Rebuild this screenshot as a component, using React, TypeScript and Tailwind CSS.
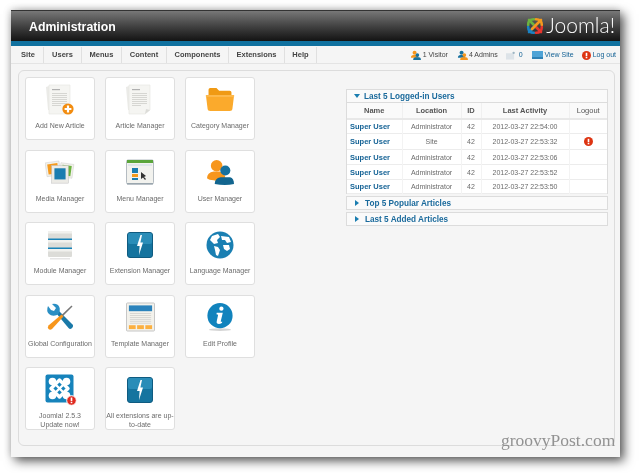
import React from "react";

const Doc = ({ plus }: { plus?: boolean }) => (
  <svg width="34" height="34" viewBox="0 0 34 34">
    <path d="M3 4 L9 2 L9 28 L5 27 Z" fill="#ebebe8" />
    <path d="M6 2 H27 V27 L22 31 H6 Z" fill="#f5f5f2" stroke="#e8e8e4" strokeWidth="0.7" />
    <path d="M22 31 L23 26 L27 27 Z" fill="#dcdcd8" />
    <rect x="9" y="6" width="8" height="1.2" fill="#b0b0b0" />
    {[10, 12, 14, 16, 18, 20, 22].map((y) => (
      <rect key={y} x="9" y={y} width={y === 22 ? 9 : 15} height="1" fill="#d6d6d2" />
    ))}
    {plus && (
      <>
        <circle cx="25" cy="26" r="5.6" fill="#f28c0f" />
        <path d="M25 22.6 V29.4 M21.6 26 H28.4" stroke="#fff" strokeWidth="2.2" />
      </>
    )}
  </svg>
);

const Folder = () => (
  <svg width="30" height="25" viewBox="0 0 34 28">
    <path d="M4 3 Q4 1 6 1 H13 L16 4 H28 Q30 4 30 6 V12 H4 Z" fill="#f09a14" />
    <path d="M1 9 H33 L31 25 Q31 27 28 27 H6 Q3 27 3 25 Z" fill="#fbaa2c" />
    <rect x="1" y="9" width="32" height="2" fill="#fdbb50" />
  </svg>
);

const Media = () => (
  <svg width="30" height="26" viewBox="0 0 32 28">
    <g transform="rotate(-8 9 11)">
      <rect x="1" y="3" width="15" height="15" fill="#f2f1ea" stroke="#ccc" strokeWidth=".5" />
      <rect x="3" y="5" width="11" height="11" fill="#f59a1e" />
    </g>
    <g transform="rotate(8 24 12)">
      <rect x="16" y="5" width="14" height="15" fill="#f2f1ea" stroke="#ccc" strokeWidth=".5" />
      <rect x="18" y="7" width="10" height="11" fill="#6cb33f" />
    </g>
    <rect x="7" y="7" width="18" height="19" fill="#ecebe6" stroke="#bbb" strokeWidth=".5" />
    <rect x="10" y="10" width="12" height="12" fill="#1a7db0" />
  </svg>
);

const MenuIcon = () => (
  <svg width="28" height="26" viewBox="0 0 28 26">
    <rect x="0.5" y="1" width="27" height="24" rx="1.5" fill="#f2f2ee" stroke="#b5bcc2" />
    <rect x="1" y="1" width="26" height="3" fill="#5aa53a" />
    <rect x="2" y="5" width="24" height="2" fill="#dfe6ea" />
    <rect x="6" y="9" width="6" height="5" fill="#1a7db0" />
    <rect x="6" y="15" width="6" height="3" fill="#f29a1e" />
    <rect x="6" y="19" width="6" height="2" fill="#1a7db0" />
    <path d="M15 13 L15 20 L17 18.5 L19 21 L20 20 L18 18 L20 17 Z" fill="#333" />
    <rect x="1" y="24" width="26" height="1.5" fill="#9aa6ae" />
  </svg>
);

const Users = () => (
  <svg width="29" height="27" viewBox="0 0 30 28">
    <circle cx="11" cy="7" r="6" fill="#f7961c" />
    <path d="M1 20 Q1 14 8 13 H14 Q20 14 20 20 Q14 24 8 22 Q3 22 1 20Z" fill="#f7961c" />
    <circle cx="20" cy="12" r="5.2" fill="#17719f" />
    <path d="M9 26 Q9 20 15 19 H25 Q29 20 29 26 Q20 28 9 26Z" fill="#12658f" />
  </svg>
);

const Module = () => (
  <svg width="26" height="30" viewBox="0 0 26 30">
    {[1, 10, 19].map((y) => (
      <g key={y}>
        <rect x="1" y={y} width="24" height="8" rx="1" fill="#dcdcd8" />
        <rect x="1" y={y} width="24" height="2.5" fill="#f1f1ee" />
        {y > 1 && <rect x="1" y={y - 1.5} width="24" height="1.5" fill="#1a83b8" />}
      </g>
    ))}
    <rect x="3" y="28" width="20" height="1.5" fill="#e5e5e5" />
  </svg>
);

const Extension = () => (
  <svg width="26" height="26" viewBox="0 0 26 26">
    <rect x="0.5" y="0.5" width="25" height="25" rx="2.5" fill="#15749f" stroke="#0f5b80" />
    <rect x="1" y="1" width="24" height="11" rx="2" fill="#2a8db8" />
    <path d="M13.5 3 L10 14 L12.6 14 L12 23 L16 10.5 L13.4 10.5 L15 3 Z" fill="#fff" />
  </svg>
);

const Globe = () => (
  <svg width="28" height="28" viewBox="0 0 28 28">
    <circle cx="14" cy="14" r="13.5" fill="#1a7fb2" />
    <path d="M6 5 L12 3 L14 6 L11 9 L12 12 L8 13 L4 9 Z" fill="#fff" />
    <path d="M15 5 L23 6 L25 11 L21 12 L19 9 L16 9 Z" fill="#fff" />
    <path d="M8 15 L12 16 L14 19 L12 25 L10 24 L9 19 Z" fill="#fff" />
    <path d="M17 14 L23 14 L24 18 L21 20 L18 18 Z" fill="#fff" />
  </svg>
);

const Tools = () => (
  <svg width="28" height="28" viewBox="0 0 28 28">
    <path d="M10 10 L12.5 7.5 L27 22 Q27.5 24 25.5 25.5 Q24 26.5 22.5 25 Z" fill="#1a79a8" />
    <path d="M2 3 Q0 8 3 11 Q6 14 11 12 L13 10 Q15 5 12 2 Q9 0 6 1 L10 5 L8 8 L5 7 Z" fill="#2a8fc4" />
    <path d="M25.5 2.5 L26.5 3.5 L17 13 L15.5 12 Z" fill="#777" />
    <path d="M15.5 11.5 L17.5 13.5 L6 26 Q4 27.5 2.5 26 Q1 24.5 2.5 22.5 Z" fill="#f7961c" />
  </svg>
);

const Template = () => (
  <svg width="29" height="30" viewBox="0 0 30 30">
    <rect x="0.5" y="0.5" width="29" height="29" rx="1" fill="#f3f2ec" stroke="#c4c4c4" />
    <rect x="3" y="3" width="24" height="6" fill="#2b83bc" />
    {[11, 13, 15, 17, 19, 21].map((y) => (
      <rect key={y} x="4" y={y} width="22" height=".8" fill="#d0d0cc" />
    ))}
    <rect x="3" y="23.5" width="7" height="4" fill="#fbb040" />
    <rect x="11.5" y="23.5" width="7" height="4" fill="#fbb040" />
    <rect x="20" y="23.5" width="7" height="4" fill="#fbb040" />
  </svg>
);

const Info = () => (
  <svg width="28" height="31" viewBox="0 0 30 32">
    <ellipse cx="15" cy="29" rx="12" ry="1.5" fill="#d5d5d5" />
    <circle cx="15" cy="14" r="13.5" fill="#1183bd" />
    <circle cx="16.5" cy="6.5" r="2.3" fill="#fff" />
    <path d="M11.5 11 H18 L15.8 20 Q15.7 21 17.5 20.5 L17 22 Q14 23.5 12 22.5 Q11 21.5 11.5 20 L13 13 L11.2 12.6 Z" fill="#fff" />
  </svg>
);

const JoomlaTile = () => (
  <svg className="ml-[1px]" width="32" height="32" viewBox="0 0 32 32">
    <rect x="0.5" y="0.5" width="28" height="28" rx="2" fill="#1683bb" />
    <g fill="none" stroke="#fff" strokeLinecap="round" strokeLinejoin="round">
      <path d="M14.5 6 L23 14.5 L14.5 23 L6 14.5 Z" strokeWidth="3.4" />
      <path d="M8 8 L21 21 M21 8 L8 21" strokeWidth="2.4" />
    </g>
    <g fill="#fff">
      <circle cx="7.5" cy="7.5" r="3.8" />
      <circle cx="21.5" cy="7.5" r="3.8" />
      <circle cx="7.5" cy="21.5" r="3.8" />
      <circle cx="21.5" cy="21.5" r="3.8" />
    </g>
    <circle cx="26.5" cy="26.5" r="4.8" fill="#e02b20" stroke="#fff" />
    <rect x="25.7" y="23.5" width="1.6" height="3.6" fill="#fff" />
    <rect x="25.7" y="27.8" width="1.6" height="1.4" fill="#fff" />
  </svg>
);

const JoomlaLogo = () => (
  <svg width="20" height="20" viewBox="0 0 20 20" fill="none" strokeWidth="2.6" strokeLinecap="round" strokeLinejoin="round">
    <path d="M3.2 9 Q2.8 3.2 9 3.2" stroke="#6cb33f" />
    <path d="M11 3.2 Q16.8 3.2 16.8 9" stroke="#f59a1e" />
    <path d="M3.2 11 Q3.2 16.8 9 16.8" stroke="#1a83c4" />
    <path d="M11 16.8 Q16.8 16.8 16.8 11" stroke="#e8352d" />
    <path d="M4 4 L10 10" stroke="#6cb33f" />
    <path d="M10 10 L16 16" stroke="#e8352d" />
    <path d="M10 10 L4 16" stroke="#1a83c4" />
    <path d="M16 4 L7 13" stroke="#f59a1e" />
  </svg>
);

const Person = ({ a, b }: { a: string; b: string }) => (
  <svg width="11" height="11" viewBox="0 0 12 11">
    <circle cx="5" cy="2.5" r="2.2" fill={a} />
    <path d="M1 8 Q1 5 4 5 H6 Q9 5 9 8 Z" fill={a} />
    <circle cx="8" cy="5" r="2" fill={b} />
    <path d="M3.5 10.5 Q3.5 7.5 6 7.5 H10 Q12 7.5 12 10.5 Z" fill={b} />
  </svg>
);

const Alert = ({ s = 9 }: { s?: number }) => (
  <svg width={s} height={s} viewBox="0 0 10 10">
    <circle cx="5" cy="5" r="5" fill="#dd3311" />
    <rect x="4.1" y="2" width="1.8" height="3.8" fill="#fff" />
    <rect x="4.1" y="6.5" width="1.8" height="1.6" fill="#fff" />
  </svg>
);

const tiles: [React.ReactNode, React.ReactNode][] = [
  [<Doc plus />, "Add New Article"],
  [<Doc />, "Article Manager"],
  [<Folder />, "Category Manager"],
  [<Media />, "Media Manager"],
  [<MenuIcon />, "Menu Manager"],
  [<Users />, "User Manager"],
  [<Module />, "Module Manager"],
  [<Extension />, "Extension Manager"],
  [<Globe />, "Language Manager"],
  [<Tools />, "Global Configuration"],
  [<Template />, "Template Manager"],
  [<Info />, "Edit Profile"],
  [<JoomlaTile />, <>Joomla! 2.5.3<br />Update now!</>],
  [<Extension />, "All extensions are up-to-date"],
];

const menu: [string, string][] = [
  ["Site", "w-[31px]"],
  ["Users", "w-[38px]"],
  ["Menus", "w-[40px]"],
  ["Content", "w-[45px]"],
  ["Components", "w-[62px]"],
  ["Extensions", "w-[56px]"],
  ["Help", "w-[32px]"],
];

const rows = [
  ["Administrator", "2012-03-27 22:54:00", false, "h-[14px]"],
  ["Site", "2012-03-27 22:53:32", true, "h-[16px]"],
  ["Administrator", "2012-03-27 22:53:06", false, "h-[15px]"],
  ["Administrator", "2012-03-27 22:53:52", false, "h-[15px]"],
  ["Administrator", "2012-03-27 22:53:50", false, "h-[14px]"],
] as const;

const Bar = ({ open, title }: { open?: boolean; title: string }) => (
  <div className="h-[14px] flex items-center bg-[#fafafa] border border-[#dcdcdc] text-[#1a6a9c] font-bold text-[8.2px] pl-[7px] gap-[4px]">
    {open ? (
      <span className="w-0 h-0 border-x-[3px] border-x-transparent border-t-[4px] border-t-[#1a7db0]" />
    ) : (
      <span className="w-0 h-0 ml-[1px] mr-[2px] border-y-[3px] border-y-transparent border-l-[4px] border-l-[#1a7db0]" />
    )}
    <span className={open ? "pt-[2px]" : "pt-[3px]"}>{title}</span>
  </div>
);

export default function App() {
  return (
    <div className="w-[640px] h-[473px] bg-white overflow-hidden relative font-['Liberation_Sans',Arial,sans-serif] blur-[0.4px]">
      <div className="ml-[11px] mt-[10px] w-[609px] h-[447px] bg-[#f5f5f5] flex flex-col shadow-[4px_4px_10px_rgba(0,0,0,0.65),-1px_-1px_7px_rgba(0,0,0,0.15)]">
        <div className="h-[31px] flex items-center justify-between pl-[18px] pr-[5px] border-t border-[#333] bg-gradient-to-b from-[#787878] to-[#141414]">
          <span className="text-white font-bold text-[12.3px] pt-[2px]">Administration</span>
          <div className="flex items-center gap-[1px]">
            <JoomlaLogo />
            <span className="text-white text-[21px] leading-none pb-[3px] font-['Lato',sans-serif] font-light">Joomla!</span>
          </div>
        </div>
        <div className="h-[5px] bg-[#10719f]" />
        <div className="h-[17px] mt-[1px] flex items-center justify-between text-[7.5px] border-b border-[#e4e4e4]">
          <div className="flex h-full pl-[2px] text-[#444] font-bold">
            {menu.map(([m, w]) => (
              <div key={m} className={`${w} flex items-center justify-center border-r border-[#e0e0e0]`}>{m}</div>
            ))}
          </div>
          <div className="flex items-center pr-[4px] text-[#444] text-[7px]">
            <Person a="#f7961c" b="#17719f" />
            <span className="ml-[2px]">1 Visitor</span>
            <span className="ml-[9px]"><Person a="#17719f" b="#f7961c" /></span>
            <span className="ml-[1px]">4 Admins</span>
            <svg className="ml-[8px]" width="9" height="9" viewBox="0 0 10 9">
              <rect width="9" height="7" y="2" fill="#dde3e8" />
              <circle cx="8.5" cy="1.5" r="1.3" fill="#9fb6c4" />
            </svg>
            <span className="ml-[4px] text-[#146295]">0</span>
            <svg className="ml-[9px]" width="11" height="8" viewBox="0 0 11 8">
              <rect width="11" height="8" fill="#4fa3d6" />
              <rect y="6" width="11" height="2" fill="#2f81b5" />
            </svg>
            <span className="ml-[2px] text-[#146295]">View Site</span>
            <span className="ml-[8px] flex"><Alert /></span>
            <span className="ml-[2px] text-[#146295]">Log out</span>
          </div>
        </div>
        <div className="ml-[7px] mt-[6px] w-[597px] h-[376px] rounded-[6px] border border-[#dcdcdc] flex">
          <div className="pl-[6px] pt-[6px] w-[327px] shrink-0">
            <div className="grid grid-cols-[70px_70px_70px] auto-rows-[63px] gap-x-[10px] gap-y-[9.5px]">
              {tiles.map(([icon, label], i) => (
                <div key={i} className="bg-white border border-[#dfdfdf] rounded-[3px] flex flex-col items-center overflow-hidden">
                  <div className="h-[40px] w-full flex items-center justify-center pt-[3px] shrink-0">{icon}</div>
                  <div className="text-[7px] leading-[9px] mt-[3px] text-center text-[#6b6b6b]">{label}</div>
                </div>
              ))}
            </div>
          </div>
          <div className="w-[262px] pt-[18px] flex flex-col text-[#6b6b6b]">
            <Bar open title="Last 5 Logged-in Users" />
            <div className="border-x border-[#dcdcdc] bg-white">
              <table className="w-full table-fixed border-collapse text-[7px] leading-[9px]">
                <thead>
                  <tr className="h-[16px] text-[#555] font-bold text-[7.5px] bg-[#fafafa] border-b-2 border-[#e8e8e8]">
                    <th className="w-[55px] border-r border-[#f0f0f0]">Name</th>
                    <th className="w-[59px] border-r border-[#f0f0f0]">Location</th>
                    <th className="w-[20px] border-r border-[#f0f0f0]">ID</th>
                    <th className="w-[88px] border-r border-[#f0f0f0]">Last Activity</th>
                    <th className="font-normal">Logout</th>
                  </tr>
                </thead>
                <tbody>
                  {rows.map(([loc, date, alert, h], i) => (
                    <tr key={i} className={`${h} border-b border-[#ececec]`}>
                      <td className="pl-[3px] pt-[1px] text-[#146295] font-bold text-[7.5px] border-r border-[#f3f3f3]">Super User</td>
                      <td className="pt-[1px] text-center border-r border-[#f3f3f3]">{loc}</td>
                      <td className="pt-[1px] text-center border-r border-[#f3f3f3]">42</td>
                      <td className="pt-[1px] text-center border-r border-[#f3f3f3]">{date}</td>
                      <td>
                        <div className="flex justify-center">{alert && <Alert />}</div>
                      </td>
                    </tr>
                  ))}
                </tbody>
              </table>
            </div>
            <div className="mt-[2px]"><Bar title="Top 5 Popular Articles" /></div>
            <div className="mt-[2px]"><Bar title="Last 5 Added Articles" /></div>
          </div>
        </div>
      </div>
      <div className="absolute left-[501px] top-[430px] text-[17.5px] leading-[20px] text-[#929292] font-['Liberation_Serif',serif]">groovyPost.com</div>
    </div>
  );
}
